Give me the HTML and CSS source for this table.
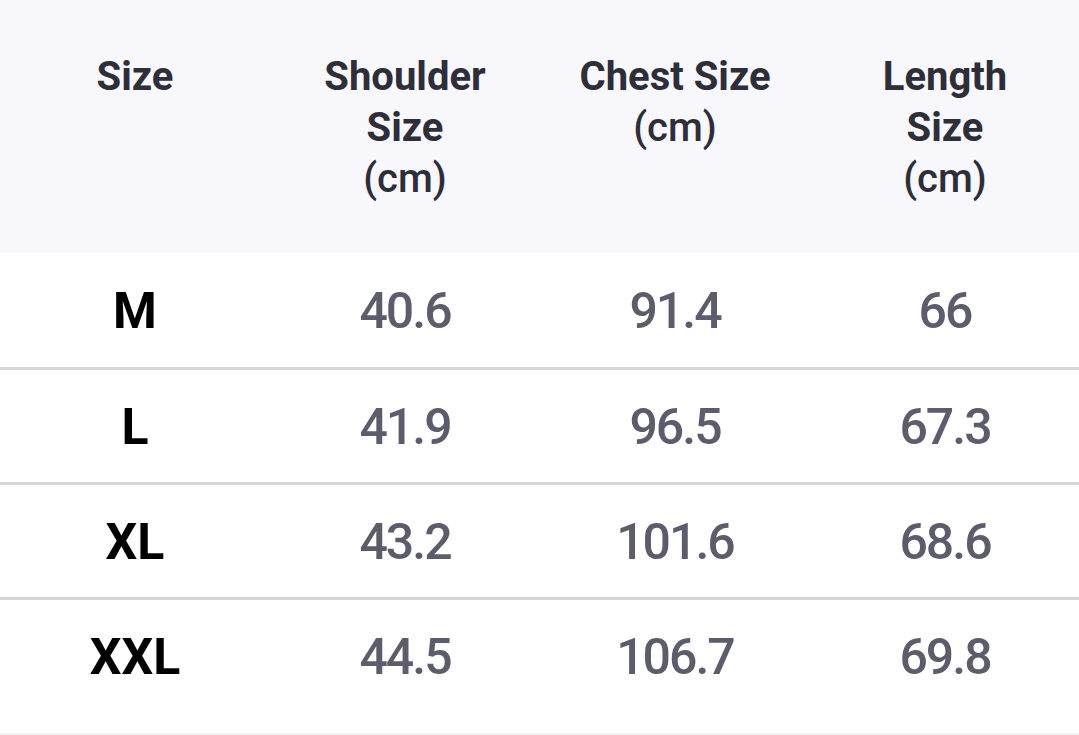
FILE: index.html
```html
<!DOCTYPE html>
<html>
<head>
<meta charset="utf-8">
<link rel="stylesheet" href="styles.css">
</head>
<body>
<div class="sheet">
  <table class="size-table">
    <thead>
      <tr>
        <th><span class="title">Size</span></th>
        <th><span class="title">Shoulder<br>Size</span><br><span class="unit">(cm)</span></th>
        <th><span class="title">Chest Size</span><br><span class="unit">(cm)</span></th>
        <th><span class="title">Length<br>Size</span><br><span class="unit">(cm)</span></th>
      </tr>
    </thead>
    <tbody>
      <tr><td class="label">M</td><td>40.6</td><td>91.4</td><td>66</td></tr>
      <tr><td class="label">L</td><td>41.9</td><td>96.5</td><td>67.3</td></tr>
      <tr><td class="label">XL</td><td>43.2</td><td>101.6</td><td>68.6</td></tr>
      <tr class="last"><td class="label">XXL</td><td>44.5</td><td>106.7</td><td>69.8</td></tr>
    </tbody>
  </table>
</div>
</body>
</html>
```

FILE: styles.css
```css
html, body {
  margin: 0;
  padding: 0;
  background: #ffffff;
}

.sheet {
  width: 1080px;
  height: 733px;
  border-bottom: 2px solid #f1f1f4;
  overflow: hidden;
}

.size-table {
  width: 1080px;
  table-layout: fixed;
  border-collapse: collapse;
  font-family: Roboto, "Liberation Sans", sans-serif;
}

.size-table thead th {
  background: #f7f7fc;
  height: 253px;
  box-sizing: border-box;
  padding: 51px 0 0 0;
  vertical-align: top;
  text-align: center;
  color: #2e2e3a;
  font-size: 40px;
  line-height: 51px;
}

.title {
  font-weight: 700;
}

.unit {
  font-weight: 500;
}

.size-table tbody td {
  height: 115px;
  box-sizing: border-box;
  padding: 2px 0 0 0;
  text-align: center;
  vertical-align: middle;
  border-bottom: 3px solid #d5d5dc;
  font-size: 50px;
  font-weight: 500;
  letter-spacing: -2px;
  color: #5c5c6c;
}

.size-table tbody tr.last td {
  border-bottom: none;
}

.size-table tbody td.label {
  color: #000000;
  font-weight: 700;
  font-size: 50px;
  letter-spacing: 0;
}
```
